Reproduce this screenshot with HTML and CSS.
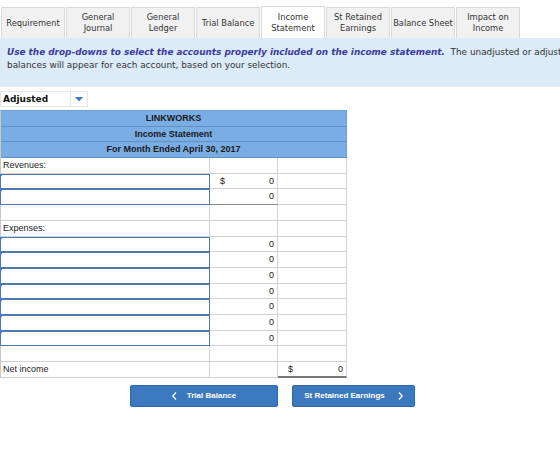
FILE: index.html
```html
<!DOCTYPE html>
<html>
<head>
<meta charset="utf-8">
<link rel="stylesheet" href="styles.css">
</head>
<body>
<div class="tabs">
  <div class="tab">Requirement</div>
  <div class="tab">General<br>Journal</div>
  <div class="tab">General<br>Ledger</div>
  <div class="tab">Trial Balance</div>
  <div class="tab active">Income<br>Statement</div>
  <div class="tab">St Retained<br>Earnings</div>
  <div class="tab">Balance Sheet</div>
  <div class="tab">Impact on<br>Income</div>
</div>
<div class="band">
  <p><em class="instr">Use the drop-downs to select the accounts properly included on the income statement.</em>&nbsp; The unadjusted or adjusted<br>balances will appear for each account, based on your selection.</p>
</div>
<div class="select">
  <span class="select-label">Adjusted</span>
  <span class="select-arrow"><svg width="8" height="5" viewBox="0 0 8 5"><path d="M0 0H8L4 4.5Z" fill="#3f78c4"/></svg></span>
</div>
<div class="stmt">
  <div class="hd">LINKWORKS</div>
  <div class="hd">Income Statement</div>
  <div class="hd">For Month Ended April 30, 2017</div>

  <div class="c lbl">Revenues:</div><div class="c"></div><div class="c"></div>
  <div class="c in"><div class="field"></div></div><div class="c amt"><span>$</span><span>0</span></div><div class="c"></div>
  <div class="c in"><div class="field"></div></div><div class="c amt total"><span></span><span>0</span></div><div class="c"></div>
  <div class="c"></div><div class="c"></div><div class="c"></div>
  <div class="c lbl">Expenses:</div><div class="c"></div><div class="c"></div>
  <div class="c in"><div class="field"></div></div><div class="c amt"><span></span><span>0</span></div><div class="c"></div>
  <div class="c in"><div class="field"></div></div><div class="c amt"><span></span><span>0</span></div><div class="c"></div>
  <div class="c in"><div class="field"></div></div><div class="c amt"><span></span><span>0</span></div><div class="c"></div>
  <div class="c in"><div class="field"></div></div><div class="c amt"><span></span><span>0</span></div><div class="c"></div>
  <div class="c in"><div class="field"></div></div><div class="c amt"><span></span><span>0</span></div><div class="c"></div>
  <div class="c in"><div class="field"></div></div><div class="c amt"><span></span><span>0</span></div><div class="c"></div>
  <div class="c in"><div class="field"></div></div><div class="c amt"><span></span><span>0</span></div><div class="c"></div>
  <div class="c"></div><div class="c"></div><div class="c"></div>
  <div class="c lbl">Net income</div><div class="c"></div><div class="c amt total net"><span>$</span><span>0</span></div>
</div>
<div class="nav">
  <button class="btn prev"><svg width="5" height="8" viewBox="0 0 5 8"><path d="M4 0.5L0.8 4L4 7.5" fill="none" stroke="#fff" stroke-width="1.2"/></svg><span>Trial Balance</span></button>
  <button class="btn next"><span>St Retained Earnings</span><svg width="5" height="8" viewBox="0 0 5 8"><path d="M1 0.5L4.2 4L1 7.5" fill="none" stroke="#fff" stroke-width="1.2"/></svg></button>
</div>
</body>
</html>
```
FILE: styles.css
```css
* { box-sizing: border-box; }
html, body { margin: 0; padding: 0; background: #fff; overflow: hidden; }
body { width: 560px; font-family: "DejaVu Sans", Verdana, sans-serif; color: #333; }

.tabs { display: flex; gap: 1px; padding: 6px 0 0 1px; height: 38px; align-items: flex-end; }
.tab {
  width: 64px; height: 31px;
  border: 1px solid #d9d9d9; border-bottom: none;
  background: #f1f1f1;
  font-size: 8.3px; line-height: 11px; color: #333;
  display: flex; align-items: center; justify-content: center; text-align: center;
}
.tab.active { background: #fff; height: 32px; }

.band { background: #dbebf8; height: 49px; padding: 8px 7px 0; white-space: nowrap; overflow: hidden; }
.band p { margin: 0; font-size: 8.9px; line-height: 13px; color: #333; }
.instr { font-weight: bold; font-style: italic; color: #3b3a9c; }

.select {
  margin-top: 4px; width: 88px; height: 16px;
  border: 1px solid #e6e6e6; display: flex; align-items: center;
}
.select-label { flex: 1; padding-left: 2px; font-weight: bold; font-size: 9px; color: #111; }
.select-arrow { width: 17px; height: 100%; border-left: 1px solid #e6e6e6; display: flex; align-items: center; justify-content: center; }

.stmt {
  margin-top: 3px; width: 347px;
  display: grid; grid-template-columns: 209px 68px 69px; grid-auto-rows: 15.7px;
  border-left: 1px solid #c9c9c9; border-top: 1px solid #6f9ed6;
  font-family: "Liberation Sans", Arial, sans-serif; font-size: 9px; color: #222;
}
.hd {
  grid-column: 1 / -1; background: #79ade4;
  border-bottom: 1px solid #5e90ca; border-right: 1px solid #6f9ed6;
  font-weight: bold; text-align: center; line-height: 14.7px; color: #1a1a1a;
}
.c { border-right: 1px solid #d2d2d2; border-bottom: 1px solid #d2d2d2; position: relative; }
.lbl { padding-left: 2px; line-height: 14.7px; }
.field { position: absolute; left: -1px; top: 0; right: -1px; bottom: -1px; border: 1px solid #5078aa; background: #fff; }
.field::before {
  content: ""; position: absolute; left: -1px; top: -1px;
  border-top: 4px solid #3e7ad0; border-right: 3px solid transparent;
}
.amt { display: flex; justify-content: space-between; padding: 0 3px 0 10px; line-height: 14.7px; }
.total { border-bottom: 1px solid #8a8a8a; }
.net { border-bottom: 2px solid #7a7a7a; }

.nav { display: flex; gap: 14px; padding-left: 130px; margin-top: 7px; }
.btn {
  height: 22px; border: 1px solid #2f69ab; border-radius: 2px; background: #3b78bd;
  color: #fff; font-family: "Liberation Sans", Arial, sans-serif; font-weight: bold; font-size: 8px;
  display: flex; align-items: center; justify-content: center; gap: 10px; padding: 0;
}
.prev { width: 148px; }
.next { width: 123px; gap: 13px; }
```
